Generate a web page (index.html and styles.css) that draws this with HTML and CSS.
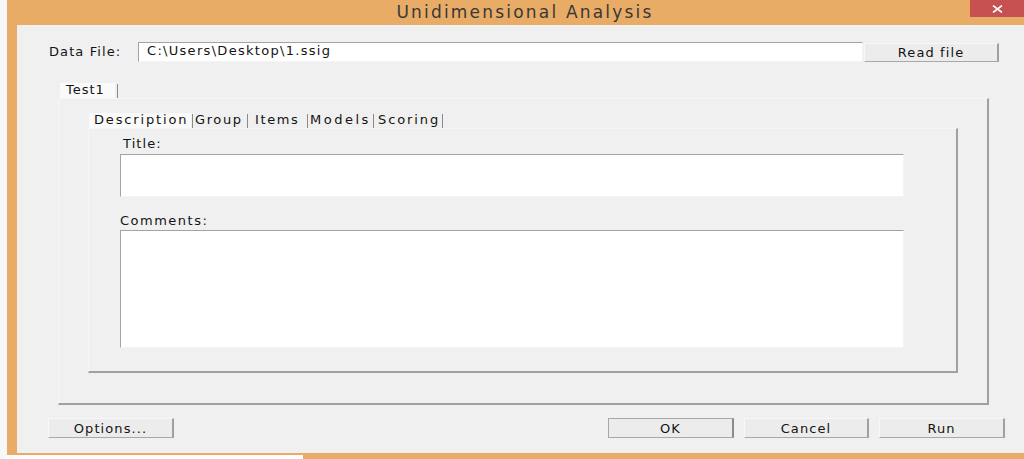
FILE: index.html
```html
<!DOCTYPE html>
<html>
<head>
<meta charset="utf-8">
<title>Unidimensional Analysis</title>
<link rel="stylesheet" href="styles.css">
</head>
<body>
<div class="window">
  <div class="titlebar">
    <span class="title">Unidimensional Analysis</span>
    <button class="close" aria-label="Close">
      <svg width="11" height="8" viewBox="0 0 11 8"><path d="M1 0.5 L10 7.5 M10 0.5 L1 7.5" stroke="#fff" stroke-width="1.6"/></svg>
    </button>
  </div>
  <div class="client">
    <div class="file-row">
      <label class="label file-label">Data File:</label>
      <div class="field file-field">C:\Users\Desktop\1.ssig</div>
      <button class="btn read-btn">Read file</button>
    </div>

    <div class="tabs outer">
      <div class="tabstrip">
        <span class="tab active">Test1</span>
      </div>
      <div class="panel outer-panel">
        <div class="tabs inner">
          <div class="tabstrip">
            <span class="tab active">Description</span>
            <span class="tab">Group</span>
            <span class="tab">Items</span>
            <span class="tab">Models</span>
            <span class="tab">Scoring</span>
          </div>
          <div class="panel inner-panel">
            <label class="label title-label">Title:</label>
            <div class="field title-field"></div>
            <label class="label comments-label">Comments:</label>
            <div class="field comments-field"></div>
          </div>
        </div>
      </div>
    </div>

    <div class="button-row">
      <button class="btn options-btn">Options...</button>
      <div class="actions">
        <button class="btn default">OK</button>
        <button class="btn">Cancel</button>
        <button class="btn">Run</button>
      </div>
    </div>
  </div>
  <div class="taskstrip"></div>
</div>
</body>
</html>
```

FILE: styles.css
```css
html, body {
  margin: 0;
  padding: 0;
  width: 1024px;
  height: 459px;
  overflow: hidden;
  background: #f7f7f7;
}

body {
  font-family: "DejaVu Sans", "Liberation Sans", sans-serif;
  font-size: 13px;
  color: #141414;
}

.window {
  position: relative;
  margin-left: 7px;
  height: 459px;
  background: #e8ac66;
  padding: 0 0 6px 10px;
  box-sizing: border-box;
  display: flex;
  flex-direction: column;
}

/* caption bar */
.titlebar {
  height: 25px;
  display: flex;
  justify-content: center;
  align-items: center;
  position: relative;
}

.title {
  font-family: "DejaVu Sans", "Open Sans", sans-serif;
  font-size: 17px;
  letter-spacing: 2.2px;
  color: #383838;
  margin-left: 9px;
  margin-top: -1px;
}

.close {
  position: absolute;
  top: 0;
  right: 0;
  width: 54px;
  height: 17px;
  border: 0;
  padding: 0;
  background: #c75050;
  display: flex;
  align-items: center;
  justify-content: center;
}

/* dialog body */
.client {
  flex: 1;
  background: #f0f0f0;
  padding-top: 17px;
  box-sizing: border-box;
}

.label {
  letter-spacing: 1.1px;
}

.field {
  background: #fff;
  border-top: 1px solid #a3a3a3;
  border-left: 1px solid #a3a3a3;
  border-right: 1px solid #f4f4f4;
  border-bottom: 1px solid #f4f4f4;
  box-sizing: border-box;
}

.btn {
  font-family: inherit;
  font-size: 13px;
  letter-spacing: 1.1px;
  color: #141414;
  background: #ececec;
  border-top: 1px solid #f8f8f8;
  border-left: 1px solid #f8f8f8;
  border-right: 2px solid #a0a0a0;
  border-bottom: 1px solid #a8a8a8;
  box-sizing: border-box;
  height: 20px;
  width: 126px;
  padding: 0;
}

.btn.default {
  border: 1px solid #a8a8a8;
  border-right: 2px solid #8c8c8c;
}

.file-row {
  display: flex;
  align-items: center;
  height: 20px;
  padding-left: 32px;
}

.file-label {
  width: 89px;
  margin-top: -2px;
}

.file-field {
  width: 725px;
  height: 20px;
  padding: 0 0 0 8px;
  line-height: 16px;
  letter-spacing: 1.3px;
}

.read-btn {
  width: 135px;
  height: 19px;
  margin-left: 1px;
  margin-top: 1px;
}

/* tab controls */
.tabs.outer {
  margin: 21px 0 0 41px;
  width: 931px;
}

.tabstrip {
  display: flex;
  align-items: flex-end;
  height: 15px;
}

.tab {
  height: 15px;
  line-height: 14px;
  letter-spacing: 1.6px;
  position: relative;
  box-sizing: border-box;
  white-space: nowrap;
}

/* separator bar at the right edge of each tab */
.tab::after {
  content: "";
  position: absolute;
  right: 0;
  top: 1px;
  width: 1px;
  height: 14px;
  background: #8a8a8a;
}

.tab.active {
  background: #fafafa;
}

.outer .tabstrip {
  padding-left: 2px;
}

.outer .tab.active {
  width: 58px;
  padding-left: 6px;
  letter-spacing: 1px;
  background: linear-gradient(to right, #fafafa 55px, transparent 55px);
}

.panel {
  box-sizing: border-box;
  border-top: 1px solid #f6f6f6;
  border-left: 1px solid #f6f6f6;
  border-right: 2px solid #a0a0a0;
  border-bottom: 2px solid #a0a0a0;
}

.outer-panel {
  height: 307px;
  padding: 14px 0 0 29px;
}

.tabs.inner {
  width: 870px;
}

.inner .tabstrip {
  padding-left: 1px;
}

.inner .tab:nth-child(1) { width: 104px; padding-left: 5px; letter-spacing: 1.85px; }
.inner .tab:nth-child(2) { width: 55px;  padding-left: 2px; }
.inner .tab:nth-child(3) { width: 60px;  padding-left: 7px; }
.inner .tab:nth-child(4) { width: 66px;  padding-left: 2px; letter-spacing: 2.5px; }
.inner .tab:nth-child(5) { width: 69px;  padding-left: 4px; letter-spacing: 1.9px; }

.inner .tab.active {
  background: linear-gradient(to right, #fafafa 102px, transparent 102px);
}

.inner-panel {
  height: 245px;
  padding: 7px 0 0 31px;
}

.title-label,
.comments-label {
  display: block;
  height: 18px;
}

.title-label {
  margin-left: 3px;
}

.title-field {
  width: 784px;
  height: 43px;
}

.comments-label {
  margin-top: 16px;
  height: 17px;
  letter-spacing: 1.5px;
}

.comments-field {
  width: 784px;
  height: 118px;
}

/* bottom buttons */
.button-row {
  display: flex;
  justify-content: space-between;
  margin: 13px 0 0 31px;
  width: 957px;
}

.actions {
  display: flex;
  gap: 10px;
}

.actions .btn:nth-child(2) {
  width: 125px;
}

/* strip peeking below the frame */
.taskstrip {
  position: absolute;
  left: 0;
  bottom: 0;
  width: 296px;
  height: 4px;
  background: #fdfdfd;
}
```
